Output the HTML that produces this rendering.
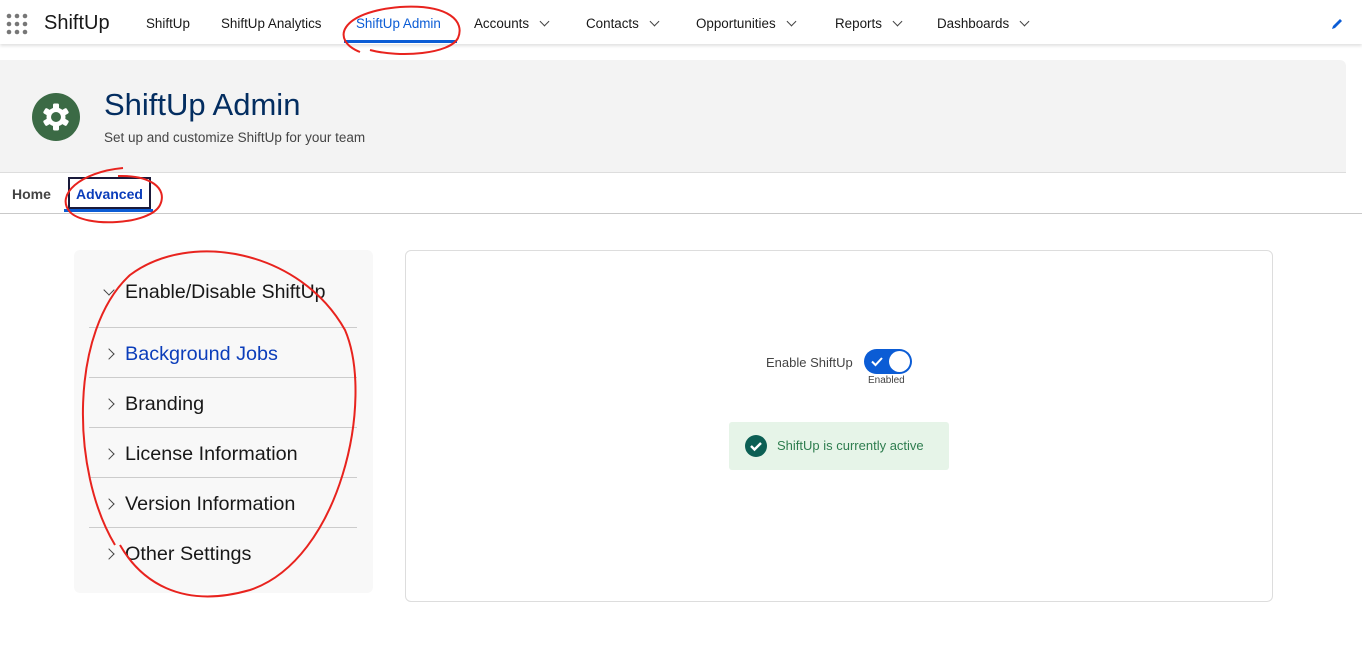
<!DOCTYPE html>
<html><head><meta charset="utf-8"><style>
*{box-sizing:border-box;margin:0;padding:0}
body{width:1362px;height:649px;overflow:hidden;background:#fff;font-family:"Liberation Sans",Arial,sans-serif;color:#181818;position:relative}
.top{position:absolute;left:0;top:0;width:1362px;height:44px;background:#fff;box-shadow:0 2px 3px rgba(0,0,0,.12);z-index:2}
.nav{position:absolute;top:16px;font-size:13.4px;color:#181818;white-space:nowrap}
.chev{display:inline-block;width:7px;height:7px;border-right:1.5px solid #444;border-bottom:1.5px solid #444;transform:rotate(45deg);margin-left:12px;position:relative;top:-3px}
.hdr{position:absolute;left:0;top:60px;width:1346px;height:113px;background:#f3f3f3;border-radius:0 6px 0 0;border-bottom:1px solid #ddd}
.tabs{position:absolute;left:0;top:173px;width:1362px;height:41px;border-bottom:1px solid #c9c9c9}
.side{position:absolute;left:74px;top:250px;width:299px;height:343px;background:#f8f8f8;border-radius:6px}
.item{position:absolute;left:15px;width:268px;height:50px;border-top:1px solid #ccc;font-size:19.8px;color:#181818}
.item span{position:absolute;left:36px;top:15px}
.item i{position:absolute;left:16px;top:22px;width:8px;height:8px;border-right:1.3px solid #444;border-top:1.3px solid #444;transform:rotate(45deg)}
.card{position:absolute;left:405px;top:250px;width:868px;height:352px;border:1px solid #ddd;border-radius:6px;background:#fff}
</style></head><body>
<div class="top">
<svg style="position:absolute;left:6px;top:13px" width="22" height="22"><g fill="#777"><circle cx="3" cy="3" r="2.3"/><circle cx="11" cy="3" r="2.3"/><circle cx="19" cy="3" r="2.3"/><circle cx="3" cy="11" r="2.3"/><circle cx="11" cy="11" r="2.3"/><circle cx="19" cy="11" r="2.3"/><circle cx="3" cy="19" r="2.3"/><circle cx="11" cy="19" r="2.3"/><circle cx="19" cy="19" r="2.3"/></g></svg>
<div class="nav" style="left:44px;top:12px;font-size:20px">ShiftUp</div>
<div class="nav" style="left:146px">ShiftUp</div>
<div class="nav" style="left:221px">ShiftUp Analytics</div>
<div class="nav" style="left:356px;color:#0b5cd5">ShiftUp Admin</div>
<div style="position:absolute;left:344px;top:40px;width:113px;height:3px;background:#0b5cd5"></div>
<div class="nav" style="left:474px">Accounts<span class="chev"></span></div>
<div class="nav" style="left:586px">Contacts<span class="chev"></span></div>
<div class="nav" style="left:696px">Opportunities<span class="chev"></span></div>
<div class="nav" style="left:835px">Reports<span class="chev"></span></div>
<div class="nav" style="left:937px">Dashboards<span class="chev"></span></div>
<svg style="position:absolute;left:1330px;top:17px" width="14" height="14"><path d="M2 12 L3 9 L10 2 L12 4 L5 11 Z" fill="#0b5cd5"/></svg>
</div>
<div class="hdr">
<svg style="position:absolute;left:32px;top:33px" width="48" height="48"><circle cx="24" cy="24" r="24" fill="#3b6a45"/><g transform="translate(24 24)" fill="#fff"><circle r="9.5"/><g><rect x="-3" y="-13.5" width="6" height="27" rx="1.5"/><rect x="-3" y="-13.5" width="6" height="27" rx="1.5" transform="rotate(60)"/><rect x="-3" y="-13.5" width="6" height="27" rx="1.5" transform="rotate(120)"/></g><circle r="5" fill="#3b6a45"/><circle r="3" fill="#fff" opacity="0"/></g></svg>
<div style="position:absolute;left:104px;top:27px;font-size:31px;color:#032d60">ShiftUp Admin</div>
<div style="position:absolute;left:104px;top:70px;font-size:13.5px;color:#444">Set up and customize ShiftUp for your team</div>
</div>
<div class="tabs">
<div style="position:absolute;left:12px;top:13px;font-size:14px;color:#444;font-weight:bold">Home</div>
<div style="position:absolute;left:68px;top:4px;width:83px;height:32px;border:2px solid #1a1a3a"></div>
<div style="position:absolute;left:76px;top:13px;font-size:14px;color:#0b3dba;font-weight:bold">Advanced</div>
<div style="position:absolute;left:64px;top:36px;width:89px;height:3px;background:#0b5cd5"></div>
</div>
<div class="side">
<div style="position:absolute;left:51px;top:31px;font-size:19.5px">Enable/Disable ShiftUp</div>
<i style="position:absolute;left:31px;top:36px;width:8px;height:8px;border-right:1.3px solid #444;border-bottom:1.3px solid #444;transform:rotate(45deg)"></i>
<div class="item" style="top:77px"><i></i><span style="color:#0b3dba">Background Jobs</span></div>
<div class="item" style="top:127px"><i></i><span>Branding</span></div>
<div class="item" style="top:177px"><i></i><span>License Information</span></div>
<div class="item" style="top:227px"><i></i><span>Version Information</span></div>
<div class="item" style="top:277px"><i></i><span>Other Settings</span></div>
</div>
<div class="card">
<div style="position:absolute;left:360px;top:104px;font-size:13px;color:#444">Enable ShiftUp</div>
<div style="position:absolute;left:458px;top:98px;width:48px;height:25px;border-radius:13px;background:#0b5cd5"><div style="position:absolute;right:2px;top:2px;width:21px;height:21px;border-radius:50%;background:#fff"></div>
<svg style="position:absolute;left:7px;top:7px" width="12" height="11"><path d="M1 5.5 L4.5 9 L11 2" stroke="#fff" stroke-width="2" fill="none"/></svg></div>
<div style="position:absolute;left:462px;top:124px;font-size:10px;color:#444">Enabled</div>
<div style="position:absolute;left:323px;top:171px;width:220px;height:48px;background:#e6f4e8;border-radius:3px">
<svg style="position:absolute;left:16px;top:13px" width="22" height="22"><circle cx="11" cy="11" r="11" fill="#0c5f54"/><path d="M6 11 L9.5 14.5 L16 8" stroke="#fff" stroke-width="2.4" fill="none"/></svg>
<div style="position:absolute;left:48px;top:16px;font-size:13px;color:#2e7d4f">ShiftUp is currently active</div>
</div>
</div>
<svg style="position:absolute;left:0;top:0;z-index:5" width="1362" height="649" fill="none" stroke="#e8231e" stroke-width="2">
<path d="M360 52 C330 40 340 12 400 7 C450 4 465 22 458 38 C450 54 400 58 370 50"/>
<path d="M123 168 C80 172 55 195 70 212 C85 228 150 225 160 205 C168 188 150 175 118 176"/>
<path d="M115 545 C70 470 70 330 130 275 C190 230 300 250 345 330 C375 400 340 560 250 590 C180 610 140 580 120 545"/>
</svg>
</body></html>
